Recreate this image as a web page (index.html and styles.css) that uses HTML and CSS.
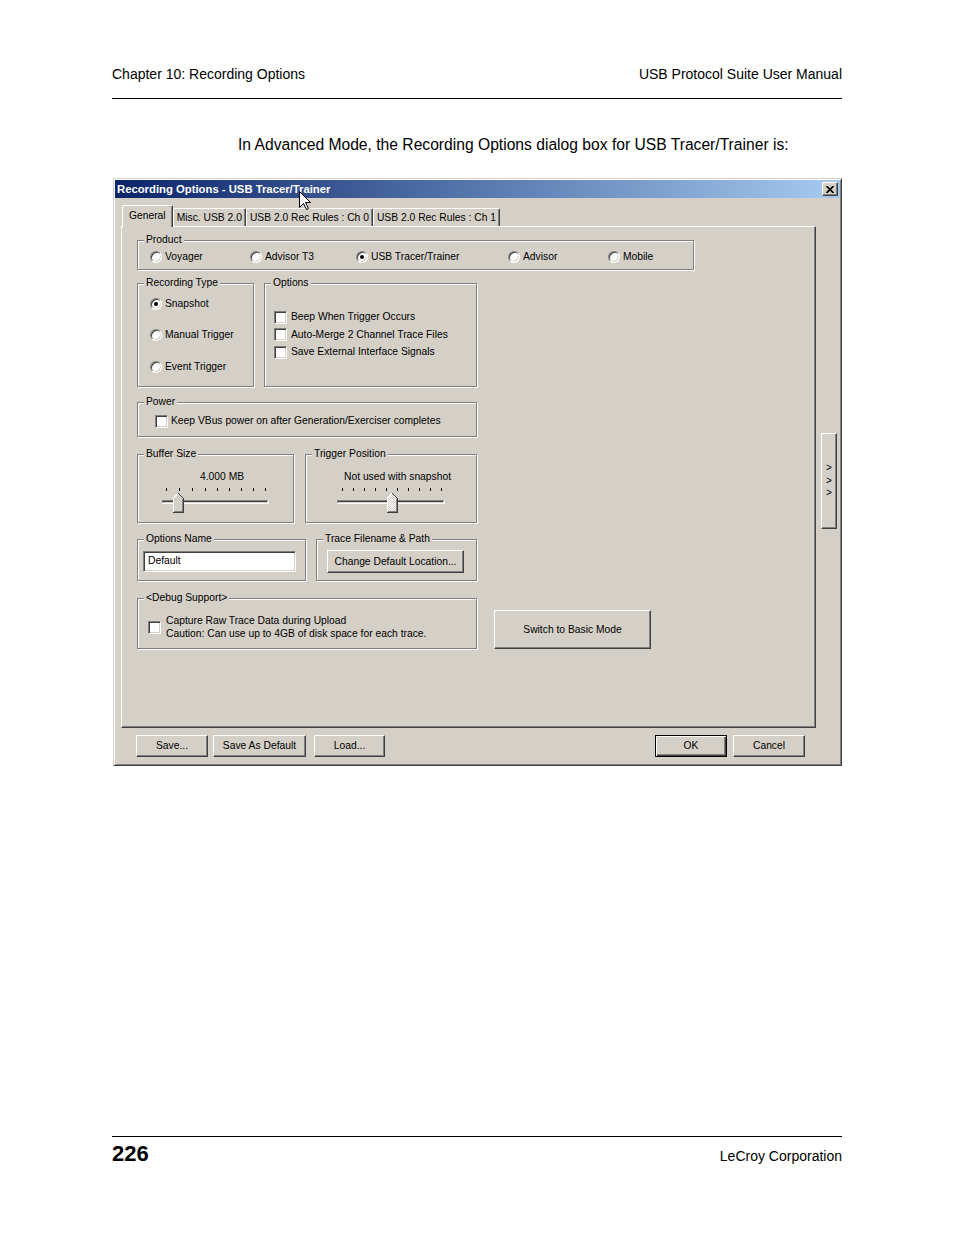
FILE: index.html
```html
<!DOCTYPE html>
<html lang="en">
<head>
<meta charset="utf-8">
<title>Recording Options</title>
<link rel="stylesheet" href="styles.css">
</head>
<body>
<div class="page">
  <header class="running-head">
    <span>Chapter 10: Recording Options</span>
    <span>USB Protocol Suite User Manual</span>
  </header>
  <div class="rule"></div>

  <p class="intro">In Advanced Mode, the Recording Options dialog box for USB Tracer/Trainer is:</p>

  <div class="dialog">
    <div class="titlebar">
      <span class="title">Recording Options - USB Tracer/Trainer</span>
      <span class="close"><svg width="8" height="7" viewBox="0 0 8 7"><path d="M0.5 0 L7.5 7 M7.5 0 L0.5 7" stroke="#000" stroke-width="1.7" fill="none"/></svg></span>
    </div>
    <svg class="cursor" width="13" height="20" viewBox="0 0 13 20"><path d="M0.5 0.5 L0.5 16.5 L4.5 12.5 L7.5 18.5 L9.5 17.5 L6.5 11.5 L11.5 11.5 Z" fill="#fff" stroke="#000" stroke-width="1" stroke-linejoin="miter"/></svg>

    <div class="dbody">
      <div class="tabs">
        <div class="tab sel">General</div>
        <div class="tab">Misc. USB 2.0</div>
        <div class="tab">USB 2.0 Rec Rules : Ch 0</div>
        <div class="tab">USB 2.0 Rec Rules : Ch 1</div>
      </div>

      <div class="panel-row">
        <div class="panel">
          <fieldset class="grp product">
            <legend>Product</legend>
            <div class="gbody product-body">
              <label class="opt"><span class="radio"></span>Voyager</label>
              <label class="opt"><span class="radio"></span>Advisor T3</label>
              <label class="opt"><span class="radio on"></span>USB Tracer/Trainer</label>
              <label class="opt"><span class="radio"></span>Advisor</label>
              <label class="opt"><span class="radio"></span>Mobile</label>
            </div>
          </fieldset>

          <div class="row r2">
            <fieldset class="grp rectype">
              <legend>Recording Type</legend>
              <div class="gbody rectype-body">
                <label class="opt"><span class="radio on"></span>Snapshot</label>
                <label class="opt"><span class="radio"></span>Manual Trigger</label>
                <label class="opt"><span class="radio"></span>Event Trigger</label>
              </div>
            </fieldset>
            <fieldset class="grp options">
              <legend>Options</legend>
              <div class="gbody options-body">
                <label class="opt chk-row"><span class="check"></span>Beep When Trigger Occurs</label>
                <label class="opt chk-row"><span class="check"></span>Auto-Merge 2 Channel Trace Files</label>
                <label class="opt chk-row"><span class="check"></span>Save External Interface Signals</label>
              </div>
            </fieldset>
          </div>

          <fieldset class="grp power">
            <legend>Power</legend>
            <div class="gbody power-body">
              <label class="opt"><span class="check"></span>Keep VBus power on after Generation/Exerciser completes</label>
            </div>
          </fieldset>

          <div class="row r4">
            <fieldset class="grp buffer">
              <legend>Buffer Size</legend>
              <div class="gbody slider-body">
                <div class="slider-label buffer-label">4.000 MB</div>
                <svg class="slider" width="155" height="32" viewBox="0 0 155 32" shape-rendering="crispEdges">
                  <g fill="#000">
                    <rect x="28" y="5" width="1" height="3"/><rect x="41" y="5" width="1" height="3"/>
                    <rect x="54" y="5" width="1" height="3"/><rect x="67" y="5" width="1" height="3"/>
                    <rect x="79" y="5" width="1" height="3"/><rect x="91" y="5" width="1" height="3"/>
                    <rect x="103" y="5" width="1" height="3"/><rect x="115" y="5" width="1" height="3"/>
                    <rect x="127" y="5" width="1" height="3"/>
                  </g>
                  <rect x="24" y="17" width="106" height="1" fill="#808080"/>
                  <rect x="25" y="18" width="104" height="1" fill="#404040"/>
                  <rect x="24" y="20" width="107" height="1" fill="#fff"/>
                  <rect x="130" y="17" width="1" height="4" fill="#fff"/>
                  <rect x="24" y="17" width="1" height="3" fill="#808080"/>
                  <polygon points="35,30 35,15 40,10 45,15 45,30" fill="#d4d0c8"/>
                  <path d="M35.5 29 V15.2 L40 10.7" stroke="#fff" fill="none"/>
                  <path d="M40.3 10.6 L45.5 15.5 V29.5 H35" stroke="#404040" fill="none"/>
                  <path d="M44.5 15.8 V28.5 H36" stroke="#808080" fill="none"/>
                </svg>
              </div>
            </fieldset>
            <fieldset class="grp trigger">
              <legend>Trigger Position</legend>
              <div class="gbody slider-body">
                <div class="slider-label trigger-label">Not used with snapshot</div>
                <svg class="slider" width="170" height="32" viewBox="0 0 170 32" shape-rendering="crispEdges">
                  <defs>
                    <pattern id="dither" width="2" height="2" patternUnits="userSpaceOnUse">
                      <rect width="2" height="2" fill="#d4d0c8"/>
                      <rect width="1" height="1" fill="#fff"/>
                      <rect x="1" y="1" width="1" height="1" fill="#fff"/>
                    </pattern>
                  </defs>
                  <g fill="#000">
                    <rect x="36" y="5" width="1" height="3"/><rect x="47" y="5" width="1" height="3"/>
                    <rect x="58" y="5" width="1" height="3"/><rect x="69" y="5" width="1" height="3"/>
                    <rect x="80" y="5" width="1" height="3"/><rect x="91" y="5" width="1" height="3"/>
                    <rect x="102" y="5" width="1" height="3"/><rect x="113" y="5" width="1" height="3"/>
                    <rect x="124" y="5" width="1" height="3"/><rect x="135" y="5" width="1" height="3"/>
                  </g>
                  <rect x="31" y="17" width="107" height="1" fill="#808080"/>
                  <rect x="32" y="18" width="105" height="1" fill="#404040"/>
                  <rect x="31" y="20" width="108" height="1" fill="#fff"/>
                  <rect x="138" y="17" width="1" height="4" fill="#fff"/>
                  <rect x="31" y="17" width="1" height="3" fill="#808080"/>
                  <polygon points="81,30 81,15 86,10 91,15 91,30" fill="url(#dither)"/>
                  <path d="M81.5 29 V15.2 L86 10.7" stroke="#fff" fill="none"/>
                  <path d="M86.3 10.6 L91.5 15.5 V29.5 H81" stroke="#404040" fill="none"/>
                  <path d="M90.5 15.8 V28.5 H82" stroke="#808080" fill="none"/>
                </svg>
              </div>
            </fieldset>
          </div>

          <div class="row r5">
            <fieldset class="grp optname">
              <legend>Options Name</legend>
              <div class="gbody optname-body">
                <div class="edit">Default</div>
              </div>
            </fieldset>
            <fieldset class="grp tracepath">
              <legend>Trace Filename &amp; Path</legend>
              <div class="gbody tracepath-body">
                <div class="btn change-btn">Change Default Location...</div>
              </div>
            </fieldset>
          </div>

          <div class="row r6">
            <fieldset class="grp debug">
              <legend>&lt;Debug Support&gt;</legend>
              <div class="gbody debug-body">
                <span class="check"></span>
                <div class="debug-text">
                  <div>Capture Raw Trace Data during Upload</div>
                  <div>Caution: Can use up to 4GB of disk space for each trace.</div>
                </div>
              </div>
            </fieldset>
            <div class="btn switch-btn">Switch to Basic Mode</div>
          </div>
        </div>

        <div class="btn side-btn"><span>&gt;</span><span>&gt;</span><span>&gt;</span></div>
      </div>

      <div class="buttons">
        <div class="btn b-save">Save...</div>
        <div class="btn b-default">Save As Default</div>
        <div class="btn b-load">Load...</div>
        <div class="spacer"></div>
        <div class="btn b-ok is-default">OK</div>
        <div class="btn b-cancel">Cancel</div>
      </div>
    </div>
  </div>

  <footer class="footer">
    <div class="rule"></div>
    <div class="footer-row">
      <span class="pageno">226</span>
      <span class="company">LeCroy Corporation</span>
    </div>
  </footer>
</div>
</body>
</html>
```

FILE: styles.css
```css
* { box-sizing: border-box; }

html, body {
  margin: 0;
  padding: 0;
  background: #fff;
}

body {
  font-family: "Liberation Sans", Arial, sans-serif;
  color: #000;
}

.page {
  width: 954px;
  height: 1235px;
  padding: 0 112px;
  display: flex;
  flex-direction: column;
}

/* running head */
.running-head {
  display: flex;
  justify-content: space-between;
  font-size: 14px;
  line-height: 16px;
  margin-top: 66px;
}

.rule {
  height: 1px;
  background: #000;
}

.running-head + .rule { margin-top: 16px; }

.intro {
  margin: 37px 0 0 126px;
  font-size: 15.65px;
  line-height: 18px;
}

/* dialog frame */
.dialog {
  position: relative;
  margin: 24px 0 0 1px;
  width: 729px;
  height: 588px;
  padding: 1px;
  background: #d4d0c8;
  border: 1px solid;
  border-color: #d4d0c8 #404040 #404040 #d4d0c8;
  box-shadow: inset 1px 1px 0 #fff, inset -1px -1px 0 #808080;
  font-family: "Liberation Sans", Arial, sans-serif;
  font-size: 10.3px;
  line-height: 12px;
  display: flex;
  flex-direction: column;
}

.titlebar {
  height: 18px;
  flex: none;
  background: linear-gradient(to right, #0a246a, #a6caf0);
  display: flex;
  align-items: center;
  justify-content: space-between;
  padding: 0 2px;
}

.title {
  color: #fff;
  font-weight: bold;
  font-size: 11.3px;
  line-height: 14px;
}

.close {
  width: 16px;
  height: 14px;
  background: #d4d0c8;
  border: 1px solid;
  border-color: #fff #404040 #404040 #fff;
  box-shadow: inset -1px -1px 0 #808080;
  display: flex;
  align-items: center;
  justify-content: center;
}

.close svg { display: block; }

.cursor {
  position: absolute;
  left: 185px;
  top: 12px;
  z-index: 5;
}

.dbody {
  flex: 1;
  padding: 7px 3px 7px 6px;
  display: flex;
  flex-direction: column;
}

/* tabs */
.tabs {
  display: flex;
  align-items: flex-end;
  height: 21px;
  padding-left: 1px;
}

.tab {
  height: 18px;
  line-height: 17px;
  padding: 0 3px;
  border: 1px solid;
  border-bottom: 0;
  border-color: #fff #404040 transparent #fff;
  border-radius: 2px 2px 0 0;
  box-shadow: inset -1px 0 0 #808080;
  white-space: nowrap;
  background: #d4d0c8;
}

.tab.sel {
  height: 22px;
  line-height: 19px;
  margin-bottom: -1px;
  padding: 0 6px;
  position: relative;
  z-index: 1;
}

/* panel */
.panel-row {
  display: flex;
  align-items: flex-start;
  gap: 5px;
}

.panel {
  width: 695px;
  height: 502px;
  border: 1px solid;
  border-color: #fff #404040 #404040 #fff;
  box-shadow: inset -1px -1px 0 #808080;
  padding: 7px 0 0 15px;
}

/* group boxes */
.grp {
  margin: 0;
  padding: 0;
  min-width: 0;
  border: 1px solid #808080;
  box-shadow: inset 1px 1px 0 #fff, 1px 1px 0 #fff;
}

.grp legend {
  margin-left: 6px;
  padding: 0 2px 0 2px;
  line-height: 12px;
  background: #d4d0c8;
  white-space: nowrap;
}

.row {
  display: flex;
  align-items: flex-start;
}

.opt {
  display: flex;
  align-items: center;
  gap: 3px;
  height: 14px;
  white-space: nowrap;
}

.radio {
  flex: none;
  position: relative;
  width: 12px;
  height: 12px;
  border-radius: 50%;
  background: #fff;
  border: 1px solid;
  border-color: #808080 #fff #fff #808080;
  box-shadow: inset 1px 1px 0 #404040, inset -1px -1px 0 #d4d0c8;
}

.radio.on::after {
  content: "";
  position: absolute;
  left: 3px;
  top: 3px;
  width: 4px;
  height: 4px;
  border-radius: 50%;
  background: #000;
}

.check {
  flex: none;
  width: 13px;
  height: 13px;
  background: #fff;
  border: 1px solid;
  border-color: #808080 #fff #fff #808080;
  box-shadow: inset 1px 1px 0 #404040, inset -1px -1px 0 #d4d0c8;
}

/* product */
.product { width: 557px; height: 36px; }

.product-body {
  display: grid;
  grid-template-columns: 100px 106px 152px 100px auto;
  padding: 4px 0 0 12px;
}

/* recording type + options */
.r2 { margin-top: 7px; gap: 10px; }

.rectype { width: 117px; height: 110px; }

.rectype-body {
  display: flex;
  flex-direction: column;
  gap: 17.5px;
  padding: 7.5px 0 0 12px;
}

.options { width: 213px; height: 110px; }

.options-body {
  display: flex;
  flex-direction: column;
  padding: 19.5px 0 0 9px;
}

.options-body .opt { height: 17.5px; gap: 4px; }

/* power */
.power { width: 340px; height: 41px; margin-top: 9px; }

.power-body { padding: 6px 0 0 17px; }

/* sliders */
.r4 { margin-top: 11px; gap: 11px; }

.buffer { width: 157px; height: 75px; }
.trigger { width: 172px; height: 75px; }

.slider-body { padding-top: 11px; }

.slider-label { line-height: 12px; white-space: nowrap; }
.buffer-label { padding-left: 62px; }
.trigger-label { padding-left: 38px; }

.slider { display: block; }

/* options name / trace path */
.r5 { margin-top: 10px; gap: 10px; }

.optname { width: 169px; height: 48px; }
.tracepath { width: 161px; height: 48px; }

.optname-body { padding: 6px 0 0 5px; }

.edit {
  width: 153px;
  height: 21px;
  background: #fff;
  border: 1px solid;
  border-color: #808080 #fff #fff #808080;
  box-shadow: inset 1px 1px 0 #404040, inset -1px -1px 0 #d4d0c8;
  padding-left: 4px;
  line-height: 18px;
}

.tracepath-body { padding: 5px 0 0 10px; }

/* buttons */
.btn {
  display: flex;
  align-items: center;
  justify-content: center;
  height: 22px;
  background: #d4d0c8;
  border: 1px solid;
  border-color: #fff #404040 #404040 #fff;
  box-shadow: inset -1px -1px 0 #808080;
  white-space: nowrap;
}

.change-btn { width: 137px; height: 23px; }

/* debug */
.r6 { margin-top: 11px; }

.debug { width: 340px; height: 57px; }

.debug-body {
  display: flex;
  align-items: center;
  gap: 5px;
  padding: 10px 0 0 10px;
}

.debug-text { line-height: 13px; white-space: nowrap; }

.switch-btn {
  width: 157px;
  height: 39px;
  margin: 18px 0 0 17px;
}

/* side expander */
.side-btn {
  flex: none;
  width: 16px;
  height: 96px;
  margin-top: 207px;
  flex-direction: column;
  line-height: 12.5px;
  font-size: 10px;
}

/* bottom buttons */
.buttons {
  display: flex;
  margin-top: 7px;
  padding: 0 32px 0 15px;
}

.spacer { flex: 1; }

.b-save { width: 72px; }
.b-default { width: 93px; margin-left: 5px; }
.b-load { width: 71px; margin-left: 8px; }
.b-ok { width: 72px; }
.b-cancel { width: 72px; margin-left: 6px; }

.btn.is-default {
  border-color: #000;
  box-shadow: inset 1px 1px 0 #fff, inset -1px -1px 0 #404040, inset -2px -2px 0 #808080;
}

/* footer */
.footer {
  margin-top: auto;
  padding-bottom: 68px;
}

.footer-row {
  display: flex;
  justify-content: space-between;
  align-items: baseline;
  margin-top: 4px;
  height: 26px;
}

.pageno {
  font-size: 22px;
  font-weight: bold;
  line-height: 26px;
}

.company {
  font-size: 14px;
  line-height: 16px;
}
```
